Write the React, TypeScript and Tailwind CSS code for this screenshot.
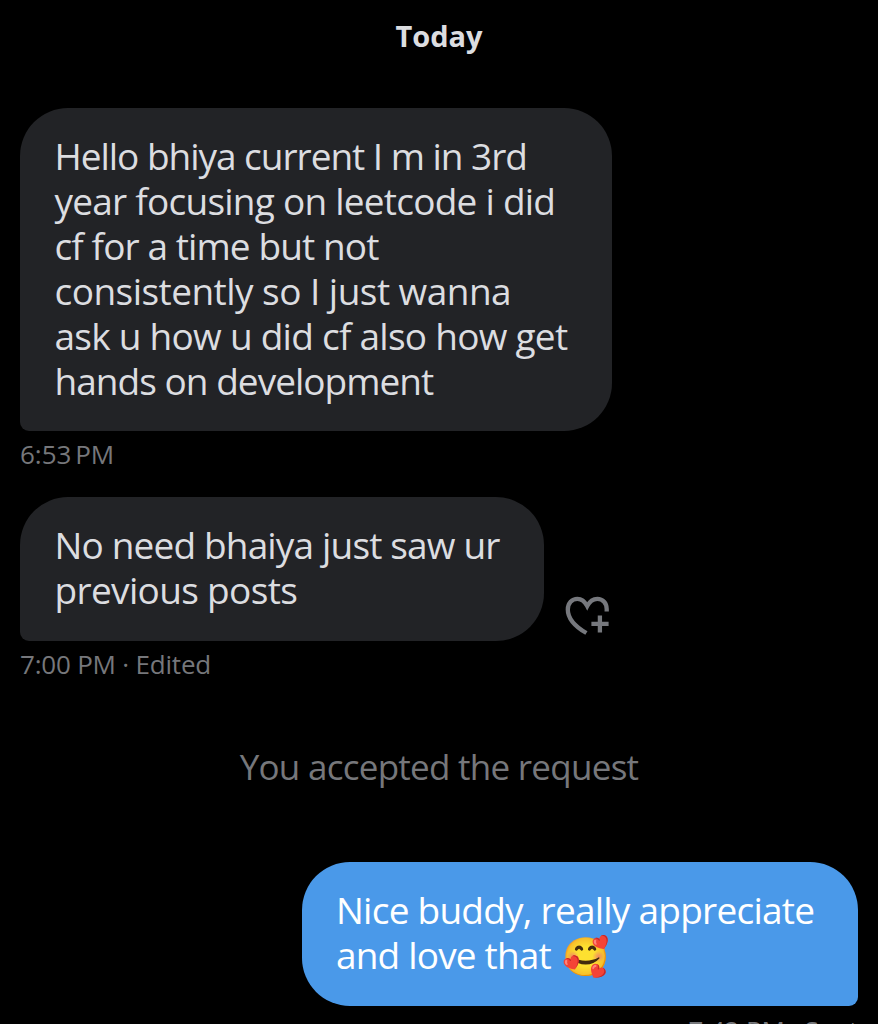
import type { ReactNode } from 'react';
import clsx from 'clsx';

function Bubble({
  own,
  className,
  children,
}: {
  own?: boolean;
  className?: string;
  children: ReactNode;
}) {
  return (
    <div
      className={clsx(
        'shrink-0 rounded-[48px] pl-[34.5px] pt-[25px] text-[37px] leading-[45px] whitespace-nowrap',
        own
          ? 'rounded-br-[9px] bg-[#4a99e9] text-white'
          : 'rounded-bl-[9px] bg-[#222326] text-[#dcdde0]',
        className,
      )}
    >
      {children}
    </div>
  );
}

function HeartPlusIcon() {
  return (
    <svg
      className="h-[42px] w-[46px]"
      viewBox="0 0 46 42"
      fill="none"
      stroke="#76787d"
      strokeWidth="4.3"
    >
      <path d="M21.4 38C11.4 32.2 2.8 24.2 2.8 14.4C2.8 8 7 3.8 12.4 3.8C16.7 3.8 19.8 6.4 22.2 11C24.6 6.4 27.9 3.8 32.4 3.8C37.8 3.8 41.7 8.2 41.7 14V16.6" />
      <path d="M34.9 20.6V37.6M26.4 28.9H43.6" />
    </svg>
  );
}

export default function App() {
  return (
    <main className="flex h-[1024px] w-[878px] flex-col overflow-hidden bg-black px-5 font-['Open_Sans',sans-serif]">
      <h1 className="mt-4 shrink-0 text-center text-[29px] leading-10 font-bold text-[#dcdde0]">
        Today
      </h1>

      <Bubble className="mt-[52px] h-[323px] w-[591.5px]">
        <p className="tracking-[-1.03px]">Hello bhiya current I m in 3rd</p>
        <p className="tracking-[-0.76px]">year focusing on leetcode i did</p>
        <p className="tracking-[-0.9px]">cf for a time but not</p>
        <p className="tracking-[-0.54px]">consistently so I just wanna</p>
        <p className="tracking-[-0.74px]">ask u how u did cf also how get</p>
        <p className="tracking-[-0.97px]">hands on development</p>
      </Bubble>
      <p className="mt-[5px] shrink-0 text-[26px] leading-9 text-[#76777b] [word-spacing:-3px]">
        6:53 PM
      </p>

      <div className="mt-[25px] flex shrink-0 items-end">
        <Bubble className="h-[144px] w-[524px]">
          <p className="tracking-[-0.84px]">No need bhaiya just saw ur</p>
          <p className="tracking-[-0.66px]">previous posts</p>
        </Bubble>
        <button className="mb-1 ml-[21px]">
          <HeartPlusIcon />
        </button>
      </div>
      <p className="mt-[5px] shrink-0 text-[26px] leading-9 tracking-[-0.2px] text-[#76777b]">
        7:00 PM · Edited
      </p>

      <p className="mt-[61px] shrink-0 text-center text-[35px] leading-[48px] tracking-[-0.73px] text-[#76777b]">
        You accepted the request
      </p>

      <Bubble own className="mt-[71px] h-[144px] w-[556.5px] self-end">
        <p className="tracking-[-0.76px]">Nice buddy, really appreciate</p>
        <p className="flex tracking-[-0.82px]">
          and love that
          <span className="ml-[11px] text-[38px] leading-[46px] tracking-normal">🥰</span>
        </p>
      </Bubble>
      <p className="mt-[6px] shrink-0 self-end text-[26px] leading-9 tracking-[-0.15px] text-[#76777b]">
        7:42 PM · Sent
      </p>
    </main>
  );
}
